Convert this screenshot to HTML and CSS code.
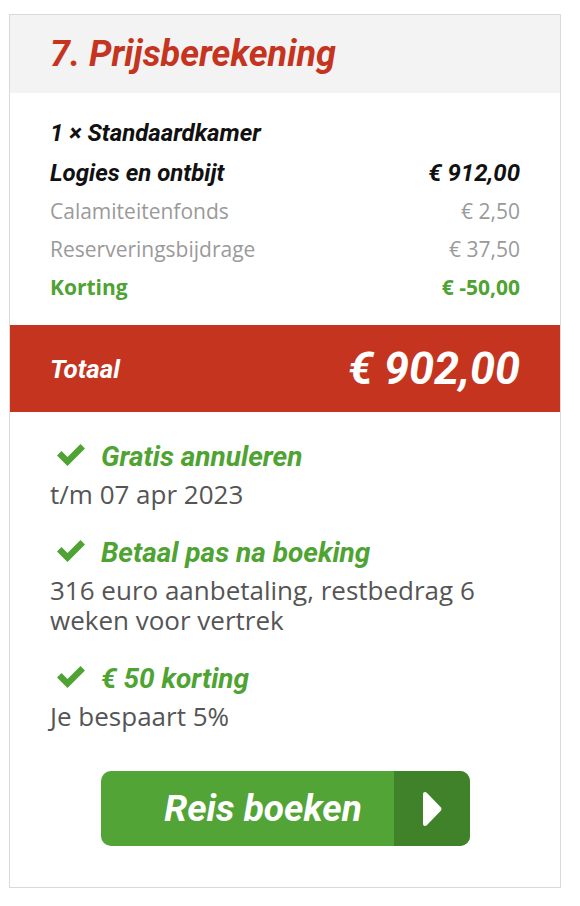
FILE: index.html
```html
<!DOCTYPE html>
<html lang="nl">

<head>
	<meta charset="UTF-8">
	<meta name="viewport" content="width=device-width, initial-scale=1.0">
	<title>Prijsberekening</title>
	<link rel="stylesheet" href="styles.css">
</head>

<body>

	<div class="panel">
		<div class="panel-head">
			<h2>7. Prijsberekening</h2>
		</div>

		<div class="lines">
			<div class="line strong first">
				<span>1 × Standaardkamer</span>
			</div>
			<div class="line strong">
				<span>Logies en ontbijt</span>
				<span>€ 912,00</span>
			</div>
			<div class="line muted">
				<span>Calamiteitenfonds</span>
				<span>€ 2,50</span>
			</div>
			<div class="line muted">
				<span>Reserveringsbijdrage</span>
				<span>€ 37,50</span>
			</div>
			<div class="line discount">
				<span>Korting</span>
				<span>€ -50,00</span>
			</div>
		</div>

		<div class="total">
			<span class="total-label">Totaal</span>
			<span class="total-price">€ 902,00</span>
		</div>

		<ul class="perks">
			<li>
				<div class="perk-title">
					<svg class="check" viewBox="0 0 32 24"><path d="M2 12.5 L6.5 8 L12.5 14 L25.5 1 L30 5.5 L12.5 23 Z" /></svg>
					Gratis annuleren
				</div>
				<p>t/m 07 apr 2023</p>
			</li>
			<li>
				<div class="perk-title">
					<svg class="check" viewBox="0 0 32 24"><path d="M2 12.5 L6.5 8 L12.5 14 L25.5 1 L30 5.5 L12.5 23 Z" /></svg>
					Betaal pas na boeking
				</div>
				<p>316 euro aanbetaling, restbedrag 6 weken voor vertrek</p>
			</li>
			<li>
				<div class="perk-title">
					<svg class="check" viewBox="0 0 32 24"><path d="M2 12.5 L6.5 8 L12.5 14 L25.5 1 L30 5.5 L12.5 23 Z" /></svg>
					€ 50 korting
				</div>
				<p>Je bespaart 5%</p>
			</li>
		</ul>

		<div class="actions">
			<button class="book">
				<span class="book-label">Reis boeken</span>
				<span class="book-arrow">
					<svg viewBox="0 0 20 36"><path d="M3 1 Q4 1 5 2 L19 16.5 Q20 18 19 19.5 L5 34 Q4 35 3 35 Q1 35 1 33 L1 3 Q1 1 3 1 Z" /></svg>
				</span>
			</button>
		</div>
	</div>

</body>

</html>
```

FILE: styles.css
```css
body {
	margin: 0;
	padding: 14px 0 0 9px;
	background: #fff;
	font-family: 'Open Sans', sans-serif;
	color: #555;
}

.panel {
	width: 550px;
	height: 872px;
	border: 1px solid #d9d9d9;
	background: #fff;
}

.panel-head {
	background: #f3f3f3;
	height: 78px;
	padding: 0 40px;
	display: flex;
	align-items: center;
}

.panel-head h2,
.line.strong,
.total,
.perk-title,
.book-label {
	font-family: 'Roboto', sans-serif;
	font-style: italic;
	font-weight: bold;
}

.panel-head h2 {
	margin: 0;
	font-size: 36px;
	color: #c5341f;
}

.lines {
	padding: 20px 40px 19px;
}

.line {
	display: flex;
	justify-content: space-between;
	height: 38px;
	align-items: center;
	font-size: 21px;
}

.line.strong {
	color: #111;
	font-size: 24px;
	height: 39px;
}

.line.strong.first {
	height: 40px;
}

.line.muted {
	color: #9a9a9a;
}

.line.discount {
	color: #4ea332;
	font-weight: bold;
}

.total {
	background: #c4341f;
	height: 87px;
	padding: 0 40px;
	display: flex;
	justify-content: space-between;
	align-items: center;
	color: #fff;
}

.total-label {
	font-size: 26px;
}

.total-price {
	font-size: 45px;
}

.perks {
	list-style: none;
	margin: 0;
	padding: 26px 40px 0;
}

.perks li {
	margin-bottom: 25px;
}

.perk-title {
	display: flex;
	align-items: center;
	gap: 14px;
	font-size: 28px;
	color: #4ea332;
	height: 36px;
}

.check {
	width: 32px;
	height: 24px;
	margin-left: 5px;
	margin-top: -3px;
	fill: #4ea332;
}

.perks p {
	margin: 5px 0 0;
	font-size: 26px;
	line-height: 30px;
	color: #555;
}

.actions {
	display: flex;
	justify-content: center;
	padding-top: 15px;
}

.book {
	display: flex;
	width: 369px;
	height: 75px;
	padding: 0;
	border: none;
	border-radius: 10px;
	overflow: hidden;
	background: #52a436;
	cursor: pointer;
}

.book-label {
	flex: 1;
	display: flex;
	align-items: center;
	justify-content: center;
	padding-left: 32px;
	color: #fff;
	font-size: 37px;
}

.book-arrow {
	width: 76px;
	background: #3f8229;
	display: flex;
	align-items: center;
	justify-content: center;
}

.book-arrow svg {
	width: 20px;
	height: 36px;
	fill: #fff;
}
```
